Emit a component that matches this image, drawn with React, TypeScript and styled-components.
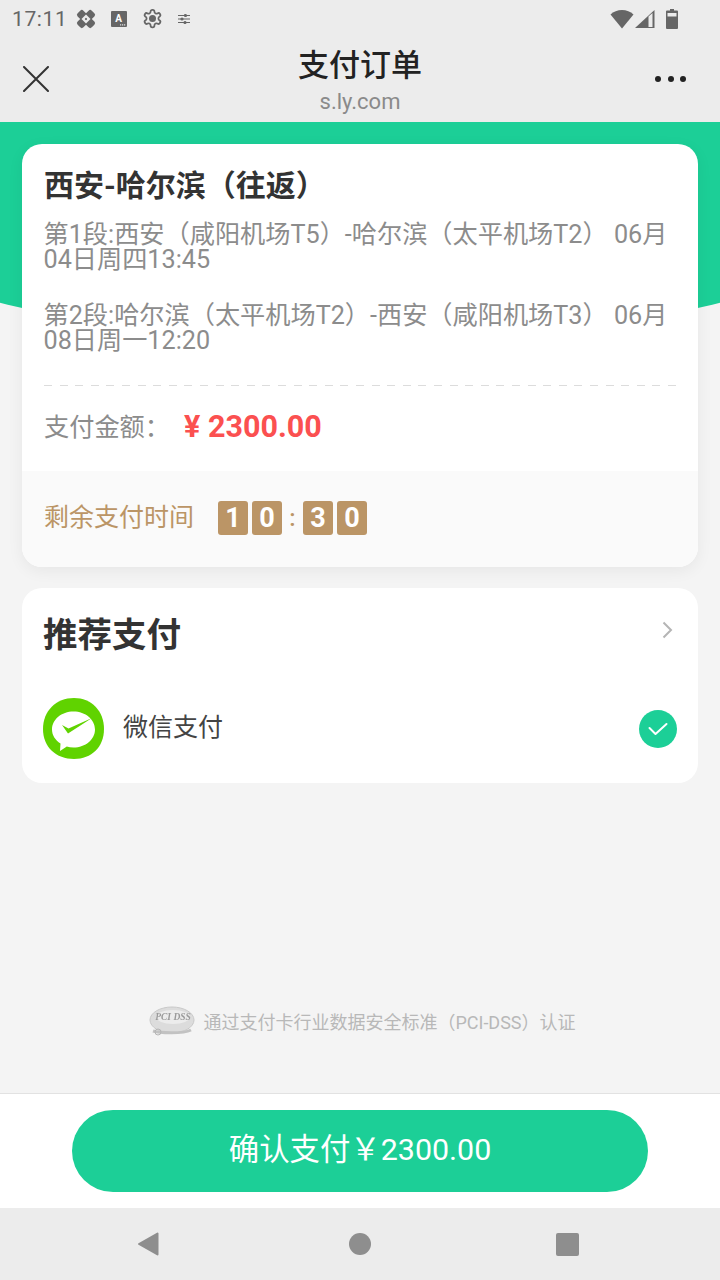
import React from 'react';
import styled, {createGlobalStyle} from "styled-components";

const GlobalStyle = createGlobalStyle`
  * { box-sizing: border-box; }
  html, body { margin: 0; padding: 0; }
  body {
    font-family: Roboto, "Noto Sans CJK SC", sans-serif;
    background: #f4f4f4;
  }
`

const legs = [
    "第1段:西安（咸阳机场T5）-哈尔滨（太平机场T2） 06月04日周四13:45",
    "第2段:哈尔滨（太平机场T2）-西安（咸阳机场T3） 06月08日周一12:20",
];

const BandageIcon = () => (
    <svg width="20" height="20" viewBox="0 0 22 22">
        <g transform="rotate(45 11 11)" fill="#666">
            <rect x="0" y="6.500" width="9" height="9" rx="2.500"/>
            <rect x="13" y="6.500" width="9" height="9" rx="2.500"/>
            <rect x="6.500" y="0" width="9" height="9" rx="2.500"/>
            <rect x="6.500" y="13" width="9" height="9" rx="2.500"/>
            <rect x="7.500" y="7.500" width="7" height="7" fill="#ececec"/>
            <circle cx="11" cy="11" r="1.200" fill="#666"/>
        </g>
    </svg>
);

const KeyboardIcon = () => (
    <svg width="16" height="16" viewBox="0 0 16 16">
        <rect width="16" height="16" rx="1" fill="#666"/>
        <text x="7.500" y="11" fontSize="10" fontWeight="700" textAnchor="middle" fill="#fff" fontFamily="Roboto">A</text>
        <rect x="9" y="13.400" width="1.200" height="1" fill="#fff"/>
        <rect x="11" y="13.400" width="1.200" height="1" fill="#fff"/>
        <rect x="13" y="13.400" width="1.200" height="1" fill="#fff"/>
    </svg>
);

const GearIcon = () => (
    <svg width="21" height="21" viewBox="0 0 24 24" fill="none" stroke="#666" strokeWidth="2">
        <path d="M12.200 2h-.4a2 2 0 0 0-2 2v.2a2 2 0 0 1-1 1.700l-.4.3a2 2 0 0 1-2 0l-.2-.1a2 2 0 0 0-2.700.700l-.2.400a2 2 0 0 0 .7 2.700l.2.100a2 2 0 0 1 1 1.700v.6a2 2 0 0 1-1 1.700l-.2.100a2 2 0 0 0-.7 2.700l.2.400a2 2 0 0 0 2.700.7l.2-.1a2 2 0 0 1 2 0l.4.3a2 2 0 0 1 1 1.700v.2a2 2 0 0 0 2 2h.4a2 2 0 0 0 2-2v-.2a2 2 0 0 1 1-1.700l.4-.3a2 2 0 0 1 2 0l.2.100a2 2 0 0 0 2.700-.7l.2-.4a2 2 0 0 0-.7-2.700l-.2-.1a2 2 0 0 1-1-1.700v-.6a2 2 0 0 1 1-1.700l.2-.1a2 2 0 0 0 .7-2.700l-.2-.4a2 2 0 0 0-2.700-.7l-.2.100a2 2 0 0 1-2 0l-.4-.3a2 2 0 0 1-1-1.700V4a2 2 0 0 0-2-2z"/>
        <circle cx="12" cy="12" r="4" fill="#666" stroke="none"/>
    </svg>
);

const TuneIcon = () => (
    <svg width="12" height="12" viewBox="0 0 12 12" stroke="#666" strokeWidth="1.200" fill="#666">
        <path d="M0 2.500h12M0 6h12M0 9.500h12" fill="none"/>
        <circle cx="7.500" cy="2.500" r="1"/>
        <circle cx="4" cy="6" r="1"/>
        <circle cx="7" cy="9.500" r="1"/>
    </svg>
);

const WifiIcon = () => (
    <svg width="24" height="20" viewBox="0 0 24 20">
        <path d="M0.500 5.500C3.500 2.500 7.500 1 12 1s8.500 1.500 11.500 4.500L12 19.500z" fill="#666"/>
    </svg>
);

const SignalIcon = () => (
    <svg width="20" height="20" viewBox="0 0 20 20">
        <path d="M0 19L19.500 1v18z" fill="#666"/>
        <path d="M13.500 7.500L17.500 4v14h-4z" fill="#ececec"/>
    </svg>
);

const BatteryIcon = () => (
    <svg width="12" height="20" viewBox="0 0 12 20">
        <path d="M4 0h4v1.500h3a1 1 0 0 1 1 1V19a1 1 0 0 1-1 1H1a1 1 0 0 1-1-1V2.500a1 1 0 0 1 1-1h3z" fill="#666"/>
        <rect x="1.500" y="4" width="9" height="3.500" fill="#ececec"/>
    </svg>
);

const CloseIcon = () => (
    <svg width="26" height="26" viewBox="0 0 26 26" stroke="#333" strokeWidth="2" strokeLinecap="round">
        <path d="M1 1l24 24M25 1L1 25"/>
    </svg>
);

const WechatIcon = () => (
    <svg width="62" height="62" viewBox="0 0 62 62">
        <path d="M31 0C48.500 0 61 13 61 31C61 49 48.500 61 31 61C13 61 0 49 0 31C0 13 13 0 31 0z" fill="#60d300"/>
        <path d="M30.500 13.500C42.500 13.500 52 21.500 52 31.500C52 41.500 42.500 49.500 30.500 49.500C28 49.500 25.800 49.200 23.800 48.600L17 53L17.500 45.500C12.300 42.200 9 37.200 9 31.500C9 21.500 18.500 13.500 30.500 13.500z" fill="#fff"/>
        <path d="M19 27L25 35.500L49 20L25.500 30.500z" fill="#60d300"/>
    </svg>
);

const PciLogo = () => (
    <svg width="46" height="32" viewBox="0 0 46 32">
        <ellipse cx="23" cy="15" rx="22" ry="13" fill="#dcdcdc" stroke="#c8c8c8"/>
        <ellipse cx="24" cy="12" rx="17" ry="7" fill="#ececec"/>
        <text x="24" y="15" fontSize="9.500" fontStyle="italic" fontWeight="700" textAnchor="middle" fill="#9a9a9a" fontFamily="Liberation Serif">PCI DSS</text>
        <path d="M4 26c6 2 30 3 38-1" stroke="#c2c2c2" strokeWidth="3" fill="none"/>
        <circle cx="9" cy="27" r="3" fill="none" stroke="#b5b5b5"/>
    </svg>
);

export default function App() {
    return (
        <Page>
            <GlobalStyle/>
            <StatusBar>
                <StatusGroup>
                    <Clock>17:11</Clock>
                    <BandageIcon/>
                    <KeyboardIcon/>
                    <GearIcon/>
                    <TuneIcon/>
                </StatusGroup>
                <RightStatusGroup>
                    <WifiIcon/>
                    <SignalIcon/>
                    <BatteryIcon/>
                </RightStatusGroup>
            </StatusBar>
            <Header>
                <CloseButton><CloseIcon/></CloseButton>
                <HeaderTitles>
                    <PageTitle>支付订单</PageTitle>
                    <PageHost>s.ly.com</PageHost>
                </HeaderTitles>
                <MoreButton><Dot/><Dot/><Dot/></MoreButton>
            </Header>
            <Main>
                <Hero/>
                <OrderCard>
                    <OrderBody>
                        <RouteTitle>西安-哈尔滨（往返）</RouteTitle>
                        <Legs>
                            {legs.map(leg => <Leg key={leg}>{leg}</Leg>)}
                        </Legs>
                        <Divider/>
                        <AmountRow>
                            <AmountLabel>支付金额：</AmountLabel>
                            <AmountValue>¥ 2300.00</AmountValue>
                        </AmountRow>
                    </OrderBody>
                    <Countdown>
                        <CountdownLabel>剩余支付时间</CountdownLabel>
                        <Digits>
                            <Digit>1</Digit>
                            <Digit>0</Digit>
                            <Colon>:</Colon>
                            <Digit>3</Digit>
                            <Digit>0</Digit>
                        </Digits>
                    </Countdown>
                </OrderCard>
                <PayCard>
                    <PayHead>
                        <PayTitle>推荐支付</PayTitle>
                        <Chevron viewBox="0 0 11 18"><path d="M1.500 1.500l7.500 7.500-7.500 7.500"/></Chevron>
                    </PayHead>
                    <PayRow>
                        <WechatIcon/>
                        <PayName>微信支付</PayName>
                        <Selected>
                            <svg width="20" height="14" viewBox="0 0 20 14" fill="none" stroke="#fff" strokeWidth="2" strokeLinecap="round" strokeLinejoin="round">
                                <path d="M1.500 6L7.500 12L18.500 2"/>
                            </svg>
                        </Selected>
                    </PayRow>
                </PayCard>
                <Certificate>
                    <PciBadge><PciLogo/></PciBadge>
                    <CertificateText>通过支付卡行业数据安全标准（PCI-DSS）认证</CertificateText>
                </Certificate>
            </Main>
            <Footer>
                <ConfirmButton>确认支付￥2300.00</ConfirmButton>
            </Footer>
            <NavBar>
                <svg width="22" height="26" viewBox="0 0 22 26"><path d="M20.500 2.500v21L2 13z" fill="#8e8e8e" stroke="#8e8e8e" strokeWidth="2" strokeLinejoin="round"/></svg>
                <NavCircle/>
                <NavSquare/>
            </NavBar>
        </Page>
    );
}

const Page = styled.div`
  width: 720px;
  height: 1280px;
  display: flex;
  flex-direction: column;
  overflow: hidden;
  background: #f4f4f4;
`

const StatusBar = styled.div`
  height: 44px;
  flex: none;
  display: flex;
  align-items: center;
  justify-content: space-between;
  padding: 0 42px 7px 12px;
  background: #ececec;
`

const StatusGroup = styled.div`
  display: flex;
  align-items: center;
  gap: 15px;
`

const RightStatusGroup = styled(StatusGroup)`
  gap: 1px;
  & > svg:last-child { margin-left: 10px; }
`

const Clock = styled.span`
  font-size: 21px;
  color: #666;
  letter-spacing: .6px;
  margin-right: -6px;
`

const Header = styled.div`
  height: 78px;
  flex: none;
  display: grid;
  grid-template-columns: 1fr auto 1fr;
  align-items: center;
  padding: 0 23px;
  background: #ececec;
`

const CloseButton = styled.div`
  display: flex;
  width: 26px;
  height: 26px;
  margin-top: -8px;
`

const HeaderTitles = styled.div`
  display: flex;
  flex-direction: column;
  align-items: center;
  margin-top: -3px;
`

const PageTitle = styled.div`
  font-size: 31px;
  line-height: 40px;
  font-weight: 500;
  color: #222;
`

const PageHost = styled.div`
  font-size: 22px;
  line-height: 32px;
  color: #8a8a8a;
`

const MoreButton = styled.div`
  display: flex;
  justify-self: end;
  gap: 6.500px;
  margin: -8px 11px 0 0;
`

const Dot = styled.span`
  width: 6px;
  height: 6px;
  border-radius: 50%;
  background: #222;
`

const Main = styled.div`
  position: relative;
  flex: 1;
  display: flex;
  flex-direction: column;
  padding: 22px 22px 0;
  min-height: 0;
`

const Hero = styled.div`
  position: absolute;
  top: 0;
  left: 0;
  width: 720px;
  height: 225px;
  background: #1ccf97;
  clip-path: ellipse(620px 222px at 50% 0);
`

const OrderCard = styled.div`
  position: relative;
  border-radius: 20px;
  overflow: hidden;
  background: #fff;
  box-shadow: 0 4px 16px rgba(0, 0, 0, .06);
`

const OrderBody = styled.div`
  padding: 22px 22px 0;
`

const RouteTitle = styled.div`
  font-size: 30px;
  line-height: 40px;
  font-weight: 700;
  color: #333;
`

const Legs = styled.div`
  display: flex;
  flex-direction: column;
  gap: 31px;
  margin-top: 16px;
  padding-bottom: 32px;
`

const Leg = styled.div`
  font-size: 25.200px;
  line-height: 25px;
  color: #8c8c8c;
  margin-left: -.5px;
`

const Divider = styled.div`
  height: 1px;
  background: repeating-linear-gradient(90deg, #dcdcdc 0 8px, transparent 8px 15.600px);
`

const AmountRow = styled.div`
  display: flex;
  align-items: center;
  height: 85px;
  padding-bottom: 4px;
`

const AmountLabel = styled.span`
  font-size: 25.200px;
  color: #8c8c8c;
  width: 140px;
  margin-top: -3px;
`

const AmountValue = styled.span`
  font-size: 30.500px;
  font-weight: 700;
  color: #fb5050;
`

const Countdown = styled.div`
  display: flex;
  align-items: center;
  height: 96px;
  padding: 0 22px 5px;
  background: #fafafa;
`

const CountdownLabel = styled.span`
  font-size: 25px;
  color: #bb9566;
  width: 174px;
  margin-top: -3px;
`

const Digits = styled.div`
  display: flex;
  align-items: center;
  gap: 4px;
  margin-top: 2px;
`

const Digit = styled.span`
  width: 30px;
  height: 34px;
  display: flex;
  align-items: center;
  justify-content: center;
  border-radius: 3px;
  background: #bb9566;
  color: #fff;
  font-size: 27px;
  font-weight: 700;
`

const Colon = styled.span`
  width: 17px;
  text-align: center;
  margin: 0 -2px;
  font-size: 24px;
  font-weight: 500;
  color: #bb9566;
`

const PayCard = styled.div`
  position: relative;
  margin-top: 21px;
  height: 195px;
  padding: 0 21px;
  border-radius: 20px;
  background: #fff;
`

const PayHead = styled.div`
  display: flex;
  align-items: center;
  justify-content: space-between;
  height: 92px;
  padding: 0 4px 4px 0;
`

const PayTitle = styled.div`
  font-size: 34.500px;
  font-weight: 700;
  color: #333;
`

const Chevron = styled.svg`
  width: 11px;
  height: 18px;
  fill: none;
  stroke: #b5b5b5;
  stroke-width: 2;
  margin-top: -4px;
`

const PayRow = styled.div`
  display: flex;
  align-items: center;
  margin-top: 18px;
`

const PayName = styled.span`
  flex: 1;
  margin: -8px 0 0 18px;
  font-size: 25px;
  color: #444;
`

const Selected = styled.span`
  width: 38px;
  height: 38px;
  display: flex;
  align-items: center;
  justify-content: center;
  border-radius: 50%;
  background: #1ccf97;
`

const Certificate = styled.div`
  display: flex;
  align-items: center;
  justify-content: center;
  gap: 8px;
  margin-top: 222px;
  padding-left: 5px;
`

const PciBadge = styled.span`
  display: flex;
  filter: blur(.5px);
`

const CertificateText = styled.span`
  font-size: 18px;
  color: #b8b8b8;
`

const Footer = styled.div`
  height: 115px;
  flex: none;
  display: flex;
  align-items: center;
  justify-content: center;
  padding-bottom: 1px;
  background: #fff;
  border-top: 1px solid #e2e2e2;
`

const ConfirmButton = styled.div`
  width: 576px;
  height: 82px;
  display: flex;
  align-items: center;
  justify-content: center;
  padding-bottom: 7px;
  border-radius: 41px;
  background: #1ccf97;
  color: #fff;
  font-size: 30.400px;
`

const NavBar = styled.div`
  height: 72px;
  flex: none;
  display: flex;
  align-items: center;
  justify-content: space-between;
  padding: 0 141px 0 137px;
  background: #ececec;
`

const NavCircle = styled.span`
  width: 22px;
  height: 22px;
  margin-left: 5px;
  border-radius: 50%;
  background: #8e8e8e;
`

const NavSquare = styled.span`
  width: 23px;
  height: 23px;
  border-radius: 2px;
  background: #8e8e8e;
`
